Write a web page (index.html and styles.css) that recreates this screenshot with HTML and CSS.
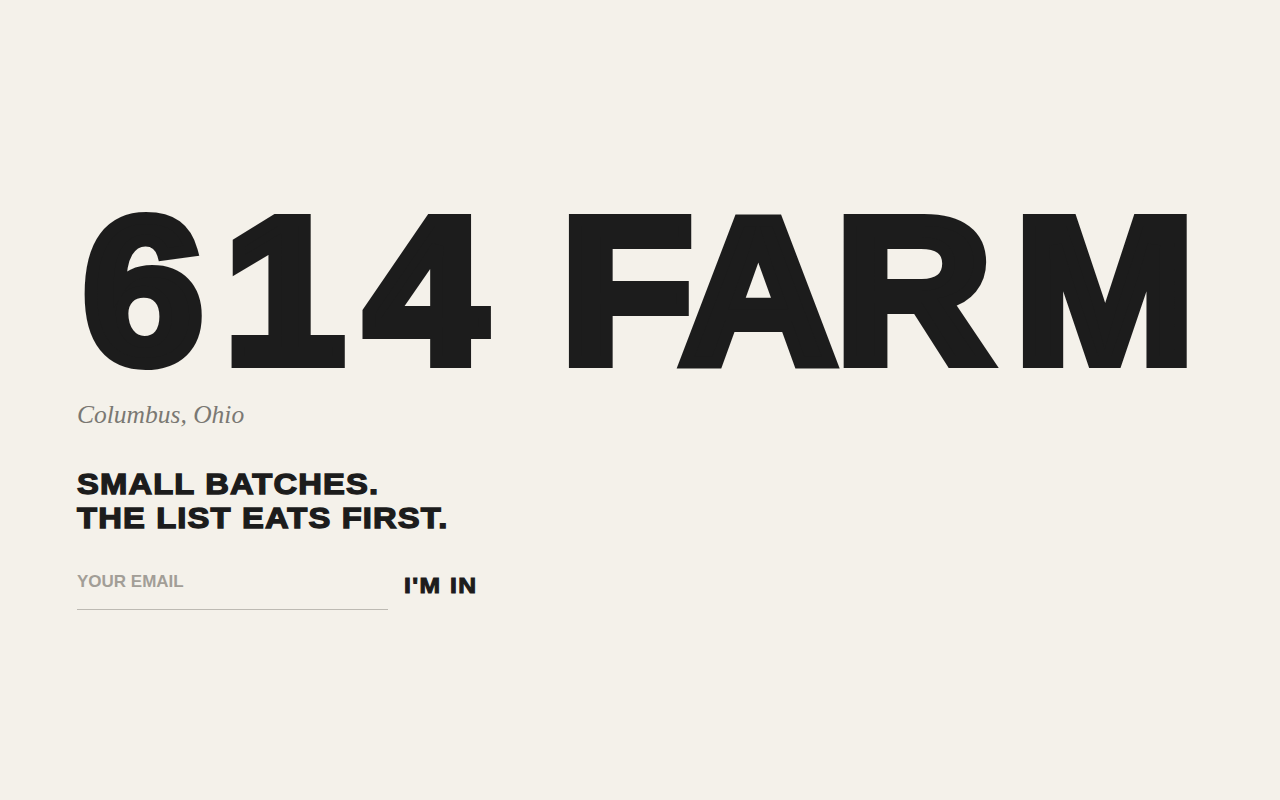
FILE: index.html
```html
<!DOCTYPE html>
<html lang="en">
<head>
<meta charset="utf-8">
<title>614 FARM</title>
<link rel="stylesheet" href="styles.css">
</head>
<body>
<main class="page">
  <h1 class="title"><span class="num">614</span> <span class="word"><span class="tight">F</span>A<span class="loose">R</span>M</span></h1>
  <p class="place">Columbus, Ohio</p>
  <h2 class="tagline">SMALL BATCHES.<br>THE LIST EATS FIRST.</h2>
  <form class="signup">
    <input class="email" type="email" placeholder="YOUR EMAIL">
    <button class="go" type="button">I'M IN</button>
  </form>
</main>
</body>
</html>
```
FILE: styles.css
```css
html, body {
  margin: 0;
  padding: 0;
  background: #f4f1ea;
  color: #1c1c1c;
}
body {
  font-family: "Liberation Sans", Arial, sans-serif;
}
.page {
  padding: 191px 77px 0 77px;
}
.title {
  width: fit-content;
  margin: 0 0 0 6px;
  height: 200px;
  font-size: 206px;
  font-weight: 700;
  line-height: 200px;
  letter-spacing: 9px;
  word-spacing: -15px;
  white-space: nowrap;
  -webkit-text-stroke: 12px #1c1c1c;
  transform: scaleX(1.05);
  transform-origin: left center;
}
.num {
  letter-spacing: 20px;
}
.word {
  letter-spacing: -1px;
}
.word .tight {
  letter-spacing: -12px;
}
.word .loose {
  letter-spacing: 22px;
}
.place {
  margin: 9px 0 0 0;
  font-family: "Liberation Serif", "Times New Roman", serif;
  font-style: italic;
  font-size: 25.5px;
  line-height: 30px;
  color: #7a7873;
}
.tagline {
  width: fit-content;
  margin: 37px 0 0 0;
  font-size: 29px;
  line-height: 34px;
  font-weight: 700;
  letter-spacing: 1px;
  -webkit-text-stroke: 1.3px #1c1c1c;
  transform: scaleX(1.13);
  transform-origin: left center;
}
.signup {
  margin: 37px 0 0 0;
  display: flex;
  align-items: flex-start;
  gap: 16px;
}
.email {
  width: 311px;
  height: 38px;
  box-sizing: border-box;
  border: 0;
  border-bottom: 1px solid #bdbab3;
  background: transparent;
  padding: 0 0 17px 0;
  font-family: "Liberation Sans", Arial, sans-serif;
  font-weight: 700;
  font-size: 17px;
  line-height: 20px;
  color: #1c1c1c;
  outline: none;
}
.email::placeholder {
  color: #a29e97;
  opacity: 1;
}
.go {
  border: 0;
  background: transparent;
  margin: 1px 0 0 0;
  padding: 0;
  font-family: "Liberation Sans", Arial, sans-serif;
  font-weight: 700;
  font-size: 22px;
  line-height: 26px;
  letter-spacing: 1.3px;
  -webkit-text-stroke: 1px #1c1c1c;
  color: #1c1c1c;
  cursor: pointer;
  transform: scaleX(1.12);
  transform-origin: left center;
}
```
